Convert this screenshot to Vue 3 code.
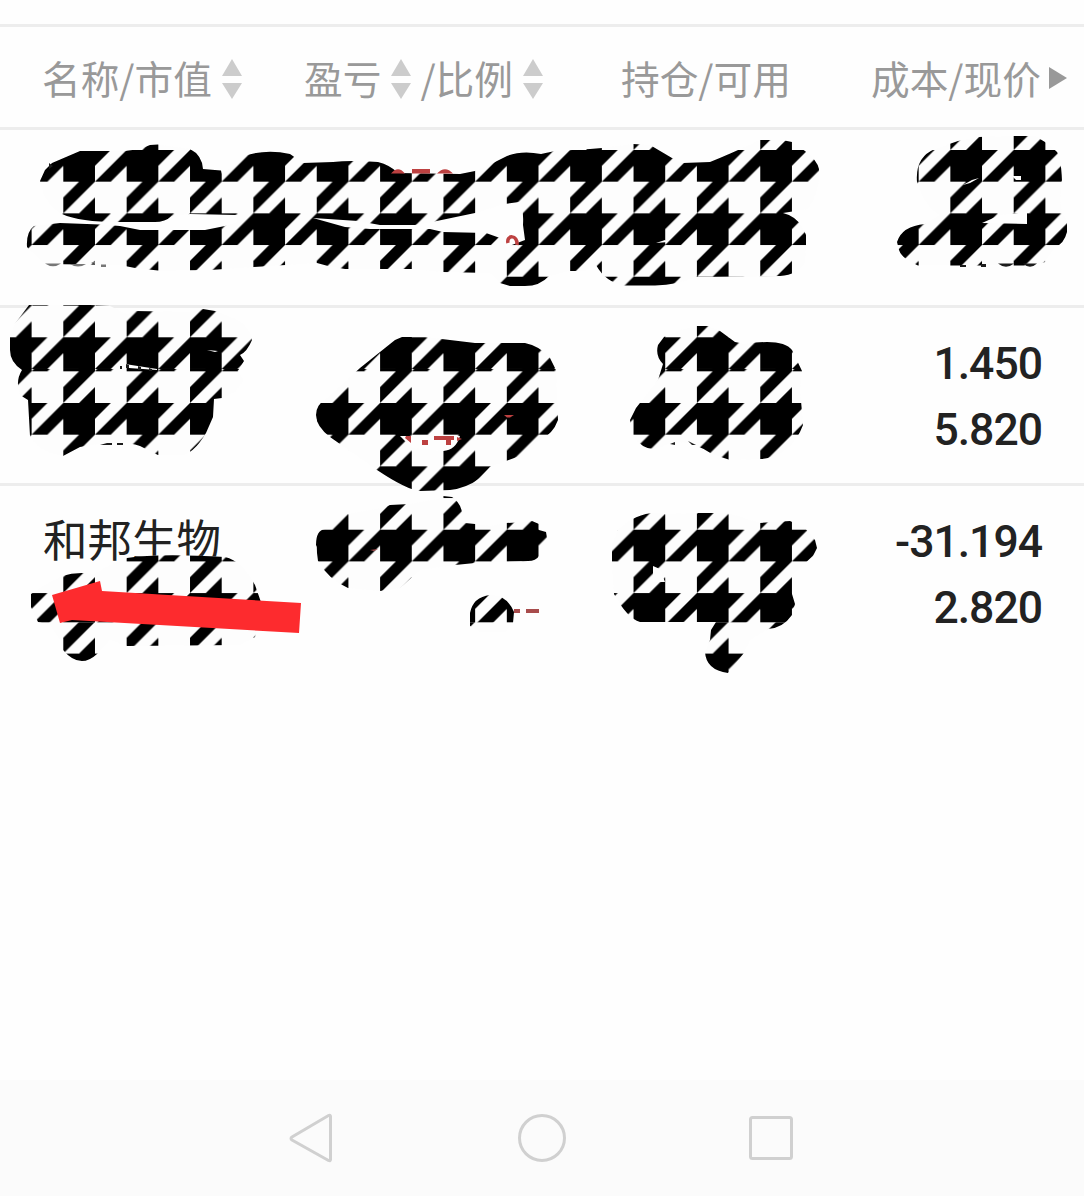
<template>
    <div class="page">
        <div class="top-gap"></div>
        <div class="header">
            <div class="cell col-name">
                <span>名称/市值</span>
                <svg class="sort" viewBox="0 0 20 40"><path d="M10 0L20 17H0zM0 24H20L10 40z" /></svg>
            </div>
            <div class="cell col-profit">
                <span>盈亏</span>
                <svg class="sort" viewBox="0 0 20 40"><path d="M10 0L20 17H0zM0 24H20L10 40z" /></svg>
                <span class="ratio">/比例</span>
                <svg class="sort" viewBox="0 0 20 40"><path d="M10 0L20 17H0zM0 24H20L10 40z" /></svg>
            </div>
            <div class="cell col-hold"><span>持仓/可用</span></div>
            <div class="cell col-price">
                <span>成本/现价</span>
                <svg class="more" viewBox="0 0 18 22"><path d="M0 0L18 11L0 22z" /></svg>
            </div>
        </div>

        <div v-for="(stock, index) in stocks" :key="index" class="row">
            <div class="name">{{ stock.name }}</div>
            <div class="price">
                <span>{{ stock.cost }}</span>
                <span>{{ stock.price }}</span>
            </div>
        </div>

        <div class="nav">
            <svg viewBox="0 0 50 50"><path d="M42.500 3.500V46.500Q42.500 48.500 40.500 47.500L4 27Q2 25.500 4 24L40.500 2.500Q42.500 1.500 42.500 3.500z" /></svg>
            <svg viewBox="0 0 50 50"><circle cx="25" cy="25" r="22.500" /></svg>
            <svg viewBox="0 0 50 50"><rect x="4.500" y="4.500" width="41" height="41" rx="2" /></svg>
        </div>

        <!-- 涂抹遮挡层 -->
        <svg class="mask" viewBox="0 0 1084 700">
            <defs>
                <pattern v-for="band in bands" :id="band.id" :key="band.id" :x="63.3" :y="band.start" width="63.36"
                    height="63.36" patternUnits="userSpaceOnUse">
                    <path :d="houndstooth" />
                </pattern>
                <clipPath id="smear">
                    <path v-for="(shape, index) in smears" :key="index" :d="shape" />
                </clipPath>
            </defs>
            <g clip-path="url(#smear)">
                <rect width="1084" height="700" fill="#fdfdfd" />
                <rect v-for="band in bands" :key="band.id" :y="band.top" width="1084" :height="band.bottom - band.top"
                    :fill="`url(#${band.id})`" />
            </g>
            <path v-for="(gap, index) in gaps" :key="index" :d="gap" fill="#fefefe" />
            <path class="red" d="M391 173.500Q398 165 405 173.500zM412 169H430V173.500H412zM437 173.500Q445 165 453 173.500z" />
            <path class="red-line" d="M508 243C506 235 518 234 517 245" />
            <path class="red" d="M406 436H411V443L405 438zM422 440H428V445H422zM434 436H454V440H451V445H446V440H434zM457 437L462 439L457 441z" />
            <path class="red" d="M504 415H514L510 417.500H507z" />
            <path class="red pale" d="M514 609H520V613H514zM526 609H539V613H526zM370 550L378 549L374 551z" />
            <path class="dark" d="M49 163L53 166L49 169zM120 366H122V369H120zM126 364L129 365V368H126zM138 366L141 367V370H138zM149 368L152 369V371H149zM100 445L107 443H112V445zM117 443H123V445H117zM670 444L675 442V445zM688 441L696 445H692z" />
            <path class="grey" d="M45 263.500H61Q53 269 45 263.500zM70 264H86Q78 269 70 264zM91 263L95 261V264zM101 264.500H106V267H101z" />
            <path class="dark" d="M960 265H966V267H960zM981 264H986V267H981zM998 263.500H1014Q1006 270 998 263.500zM1023 263.500H1037Q1030 270 1023 263.500z" />
            <path class="arrow" d="M52 595L100 581L102 591L301 603L299 633L72 620L60 623z" />
        </svg>
    </div>
</template>

<script setup>
const stocks = [
    { name: '', cost: '', price: '' },
    { name: '', cost: '1.450', price: '5.820' },
    { name: '和邦生物', cost: '-31.194', price: '2.820' }
];

// 千鸟格单元，边长 63.36
const houndstooth = 'M0 0H47.52L31.68 15.84V31.68L63.36 0V15.84L47.52 31.68H31.68L0 63.36V47.52L15.84 31.68H0z'
    + 'M31.68 47.52V63.36H15.84z';

// 图案在纵向上分段拼接
const bands = [
    { id: 'band1', start: 150, top: 130, bottom: 300 },
    { id: 'band2', start: 337.3, top: 300, bottom: 369 },
    { id: 'band3', start: 403, top: 369, bottom: 622.3 },
    { id: 'band4', start: 653.6, top: 622.3, bottom: 700 }
];

const smears = [
    // 第一行
    'M40 181L45 170L52 163L80 151L125 151L140 149L150 145L158 144.500L190 149Q202 155 203 169L221 170.500L222 174L235 165L247 155Q268 149 290 154L303 163L333 162Q350 160 378 162Q390 165 398 173L460 174L475 171Q492 164 507 156Q522 150 541 154L555 151L590 149L602 148L633 144L650 145L672 158L683 163L710 162Q730 154 760 140L782 140L792 142L805 151Q817 160 819 169Q821 190 808 209L783 213Q796 216 803 228L806 235V245L805 262Q798 275 780 276L695 277Q678 285 655 285.500H625Q606 283 596 265L585 271H570L549 276Q540 286 525 286H510L500 283L490 273L443 272L412 269H345L328 266L317 263L254 267L210 270L158 270.500L135 268L120 265L45 264L30 250L27 247Q26 232 34 226L60 223L100 224.500L120 226L140 230H205L225 226L237 222V215L190 214L172 216Q165 222 155 222H118Q80 222 62 214Q44 204 40 181z',
    'M917 182Q915 157 935 149L958 141L978 137L1013 136H1035L1045 142L1056 151Q1061 155 1062 181L1060 200L1062 213L1067 220V232Q1064 244 1055 247L1045 262L1035 265.500H918Q901 258 899 250L897 242Q902 226 925 224L940 215Q924 206 917 182z',
    // 第二行
    'M29 305H90L110 306L127 314L135 311L190 312L203 309L215 311L238 320Q250 328 252 340Q247 352 240 355L244 361L238 371L244 380L235 392L222 398L214 399L213 417L206 433Q193 455 180 455H158L140 446Q120 439 80 447L63 456Q38 452 30 436L28 400L20 395Q15 381 22 370Q10 362 10 350V336L14 325z',
    'M402 337H425L475 343H525Q540 346 550 358L556 370L558 420Q553 434 540 440L517 457L490 467L480 478Q467 488 450 490L420 491Q407 490 377 470L330 437Q316 426 316 415Q316 405 325 400L360 368L380 352L395 340z',
    'M697 326H708L720 331L735 342L745 344Q783 338 792 350L802 371L800 390L802 412L803 425Q792 455 762 459L730 460L712 454Q690 439 672 443L655 449Q643 450 632 435L630 420L636 408L658 380L663 364Q655 356 658 345L664 337L680 330z',
    // 第三行
    'M31 607V594L45 585L62 576Q77 571 94 574L110 565L127 558Q158 553 225 557Q242 561 255 585L262 605L255 637L240 645L127 646L110 640L97 654Q80 670 63 650L60 640L50 625L38 622z',
    'M316 545Q316 530 325 529L347 514L382 508L390 505L410 504L443 498V496L452 497Q460 502 462 512L455 522L475 524L490 526L506 523L525 522L532 521L539 524V530L546 532L547 538L539 548V556Q536 561 528 561L475 563L455 565L420 570L400 588L380 591L348 588Q329 580 318 561z',
    'M470 626V613Q473 597 490 595Q506 594 514 612L513 623L505 632H480z',
    'M612 561V545L618 530Q640 509 665 514L697 513H728L760 523L790 521L805 528L815 540L817 548L813 556L792 575V594L795 604L792 615Q783 628 768 629L750 640L744 653L728 673Q706 670 705 652L710 640L711 630L716 622H640Q627 618 614 594L613 580z'
];

const gaps = [
    'M313 218L358 221L380 225H415L432 222L475 213L505 204L519 202Q524 207 523 225L525 240L507 247L500 238L486 233L443 232L430 229H370L345 227z',
    'M982 223L1000 215L1027 212V224z',
    'M963 185L972 180L979 178L970 183z',
    'M1012 176H1021V180H1016z',
    'M400 436H460Q456 450 443 451L412 448z',
    'M125 364L157 369V370L129 368z',
    'M207 350L218 351L215 352z',
    'M653 566L660 569L665 582H653z',
    'M656 243L665 240L668 242z'
];
</script>

<style>
body {
    margin: 0;
    background: #fefefe;
}
</style>

<style scoped>
.page {
    position: relative;
    display: flex;
    flex-direction: column;
    width: 1084px;
    height: 1196px;
    overflow: hidden;
    background: #fefefe;
    font-family: Roboto, "Noto Sans CJK SC", sans-serif;
}

.top-gap {
    height: 24px;
    border-bottom: 3px solid #ededed;
}

.header {
    display: flex;
    height: 100px;
    padding-left: 42px;
    border-bottom: 3px solid #ededed;
    color: #999;
    font-family: "Noto Sans CJK SC", sans-serif;
    font-size: 38.7px;
    line-height: 100px;
    white-space: nowrap;
}

.cell {
    display: flex;
    align-items: center;
}

.col-name {
    width: 262px;
}

.col-profit {
    width: 317px;
}

.col-hold {
    width: 250px;
}

.sort {
    width: 20px;
    height: 40px;
    margin-top: 3px;
    margin-left: 10px;
    fill: #ccc;
}

.ratio {
    margin-left: 9px;
}

.more {
    width: 18px;
    height: 22px;
    margin-top: 2px;
    margin-left: 8px;
    fill: #999;
}

.row {
    display: flex;
    justify-content: space-between;
    height: 175px;
    padding: 0 42px 0 43px;
    border-bottom: 3px solid #ededed;
    color: #222;
}

.row:nth-child(5) {
    border-bottom: none;
}

.name {
    padding-top: 23px;
    font-size: 44.5px;
    line-height: 66px;
}

.price {
    display: flex;
    flex-direction: column;
    padding-top: 23px;
    font-size: 44.5px;
    font-weight: 500;
    letter-spacing: -1px;
    line-height: 66px;
    text-align: right;
}

.nav {
    display: flex;
    align-items: center;
    justify-content: center;
    gap: 179px;
    height: 116px;
    margin-top: auto;
    background: #fbfbfb;
}

.nav svg {
    width: 50px;
    height: 50px;
    fill: none;
    stroke: #d0d0d0;
    stroke-width: 3;
}

.mask {
    position: absolute;
    top: 0;
    left: 0;
    width: 1084px;
    height: 700px;
    pointer-events: none;
}

.red {
    fill: #bd4141;
}

.pale {
    fill: #a84c4c;
}

.red-line {
    fill: none;
    stroke: #bd4141;
    stroke-width: 3.5;
}

.dark {
    fill: #1c1c1c;
}

.grey {
    fill: #777;
}

.arrow {
    fill: #fd2b2e;
}
</style>
